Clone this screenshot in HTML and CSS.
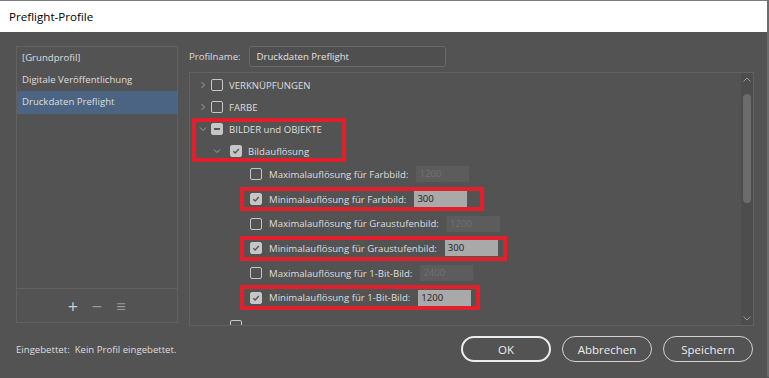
FILE: index.html
```html
<!DOCTYPE html>
<html lang="de">
<head>
    <meta charset="UTF-8">
    <title>Preflight-Profile</title>
    <link rel="stylesheet" href="styles.css">
</head>
<body>
    <div class="window">
        <div class="titlebar">Preflight-Profile</div>

        <div class="main">
            <div class="profiles">
                <ul class="profileList">
                    <li>[Grundprofil]</li>
                    <li>Digitale Veröffentlichung</li>
                    <li class="selected">Druckdaten Preflight</li>
                </ul>
                <div class="listTools">
                    <span class="tool plus">+</span>
                    <span class="tool minus">&minus;</span>
                    <span class="tool menu">&equiv;</span>
                </div>
            </div>

            <div class="editor">
                <div class="nameRow">
                    <label for="profileName">Profilname:</label>
                    <input type="text" id="profileName" class="nameField" value="Druckdaten Preflight">
                </div>

                <div class="treePanel">
                    <div class="tree">
                        <div class="row level1">
                            <svg class="chev" width="8" height="8" viewBox="0 0 8 8"><path d="M2.5 1 L5.5 4 L2.5 7" /></svg>
                            <span class="cb"></span>
                            <span class="label upper">VERKNÜPFUNGEN</span>
                        </div>
                        <div class="row level1">
                            <svg class="chev" width="8" height="8" viewBox="0 0 8 8"><path d="M2.5 1 L5.5 4 L2.5 7" /></svg>
                            <span class="cb"></span>
                            <span class="label upper">FARBE</span>
                        </div>

                        <div class="group hl">
                            <div class="row level1">
                                <svg class="chev" width="8" height="8" viewBox="0 0 8 8"><path d="M1 2.5 L4 5.5 L7 2.5" /></svg>
                                <span class="cb mixed"><span class="dash"></span></span>
                                <span class="label">BILDER und OBJEKTE</span>
                            </div>
                            <div class="row level2">
                                <svg class="chev" width="8" height="8" viewBox="0 0 8 8"><path d="M1 2.5 L4 5.5 L7 2.5" /></svg>
                                <span class="cb checked"><svg width="12" height="12" viewBox="0 0 12 12"><path d="M2.8 6.2 L5 8.4 L9.4 3.6" /></svg></span>
                                <span class="label">Bildauflösung</span>
                            </div>
                        </div>

                        <div class="row leaf">
                            <span class="cb"></span>
                            <span class="label">Maximalauflösung für Farbbild:</span>
                            <span class="value off">1200</span>
                        </div>
                        <div class="row leaf hl wideRight">
                            <span class="cb checked"><svg width="12" height="12" viewBox="0 0 12 12"><path d="M2.8 6.2 L5 8.4 L9.4 3.6" /></svg></span>
                            <span class="label">Minimalauflösung für Farbbild:</span>
                            <span class="value">300</span>
                        </div>
                        <div class="row leaf">
                            <span class="cb"></span>
                            <span class="label">Maximalauflösung für Graustufenbild:</span>
                            <span class="value off">1200</span>
                        </div>
                        <div class="row leaf hl">
                            <span class="cb checked"><svg width="12" height="12" viewBox="0 0 12 12"><path d="M2.8 6.2 L5 8.4 L9.4 3.6" /></svg></span>
                            <span class="label">Minimalauflösung für Graustufenbild:</span>
                            <span class="value">300</span>
                        </div>
                        <div class="row leaf">
                            <span class="cb"></span>
                            <span class="label">Maximalauflösung für 1-Bit-Bild:</span>
                            <span class="value off">2400</span>
                        </div>
                        <div class="row leaf hl">
                            <span class="cb checked"><svg width="12" height="12" viewBox="0 0 12 12"><path d="M2.8 6.2 L5 8.4 L9.4 3.6" /></svg></span>
                            <span class="label">Minimalauflösung für 1-Bit-Bild:</span>
                            <span class="value">1200</span>
                        </div>
                        <div class="row level2 nextRow">
                            <span class="chevSpace"></span>
                            <span class="cb"></span>
                        </div>
                    </div>

                    <div class="scrollbar">
                        <svg class="arrow" width="10" height="8" viewBox="0 0 10 8"><path d="M1.5 5.5 L5 2 L8.5 5.5" /></svg>
                        <div class="thumbTrack"><div class="thumb"></div></div>
                        <svg class="arrow" width="10" height="8" viewBox="0 0 10 8"><path d="M1.5 2.5 L5 6 L8.5 2.5" /></svg>
                    </div>
                </div>
            </div>
        </div>

        <div class="footer">
            <p class="embedded">Eingebettet:&nbsp; Kein Profil eingebettet.</p>
            <div class="buttons">
                <button class="btn primary">OK</button>
                <button class="btn">Abbrechen</button>
                <button class="btn">Speichern</button>
            </div>
        </div>
    </div>
</body>
</html>
```

FILE: styles.css
```css
body {
    margin: 0;
    padding: 0;
    width: 769px;
    height: 378px;
    overflow: hidden;
    background: #535353;
    font-family: 'Open Sans', 'Noto Sans', sans-serif;
    font-size: 9.6px;
    color: #dedede;
}

.window {
    height: 377px;
    border-top: 1px solid #7c7c7c;
    border-right: 2px solid #6b6b6b;
    box-sizing: border-box;
    display: flex;
    flex-direction: column;
}

.titlebar {
    height: 31px;
    background: #fff;
    color: #000;
    font-size: 11.6px;
    line-height: 31px;
    padding-left: 9px;
}

.main {
    display: flex;
    padding: 14px 0 0 16px;
    gap: 11px;
}

/* left column */

.profiles {
    width: 162px;
    height: 277px;
    border: 1px solid #626262;
    box-sizing: border-box;
    display: flex;
    flex-direction: column;
}

.profileList {
    list-style: none;
    margin: 0;
    padding: 0;
    flex: 1;
}

.profileList li {
    height: 22px;
    line-height: 22px;
    padding-left: 5px;
}

.profileList li.selected {
    background: #4b6483;
    height: 23px;
}

.listTools {
    height: 33px;
    border-top: 1px solid #626262;
    display: flex;
    justify-content: center;
    align-items: center;
    gap: 10px;
}

.tool {
    width: 14px;
    text-align: center;
    font-size: 18px;
    line-height: 18px;
    color: #9a9a9a;
}

.tool.plus {
    color: #cfcfcf;
}

.tool.menu {
    font-size: 16px;
}

/* right column */

.editor {
    display: flex;
    flex-direction: column;
    gap: 5px;
}

.nameRow {
    display: flex;
    align-items: center;
    gap: 8px;
}

.nameField {
    width: 197px;
    height: 21px;
    box-sizing: border-box;
    background: #4f4f4f;
    border: 1px solid #6a6a6a;
    border-radius: 3px;
    color: #e2e2e2;
    font-family: inherit;
    font-size: 9.6px;
    padding: 0 7px;
    outline: none;
}

.treePanel {
    width: 565px;
    height: 254px;
    border: 1px solid #626262;
    box-sizing: border-box;
    display: flex;
    overflow: hidden;
}

.tree {
    flex: 1;
    padding-top: 1px;
}

.row {
    display: flex;
    align-items: center;
    height: 22px;
    white-space: nowrap;
}

.level1 {
    padding-left: 9px;
}

.level2 {
    padding-left: 23px;
}

.group .level1 {
    padding-left: 7px;
}

.group .level2 {
    padding-left: 21px;
}

.leaf {
    height: 24.7px;
    padding-left: 60px;
}

.nextRow {
    margin-top: 5px;
}

.chev {
    width: 8px;
    height: 8px;
    margin-right: 4px;
    fill: none;
    stroke: #a3a3a3;
    stroke-width: 1;
}

.level2 .chev {
    margin-right: 9px;
}

.chevSpace {
    width: 17px;
}

.cb {
    width: 12px;
    height: 12px;
    box-sizing: border-box;
    border: 1px solid #c6c6c6;
    border-radius: 2px;
    flex-shrink: 0;
    display: flex;
    align-items: center;
    justify-content: center;
}

.cb.checked,
.cb.mixed {
    background: #c6c6c6;
}

.cb svg {
    fill: none;
    stroke: #565656;
    stroke-width: 1.6;
}

.cb .dash {
    width: 6px;
    height: 2px;
    background: #565656;
}

.label {
    margin-left: 6px;
}

.leaf .label {
    margin-left: 7px;
}

.value {
    width: 53px;
    height: 16px;
    line-height: 16px;
    margin-left: 8px;
    padding-left: 3px;
    box-sizing: border-box;
    background: #a9a9a9;
    color: #1c1c1c;
}

.value.off {
    background: #5c5c5c;
    color: #727272;
}

/* red markers */

.hl {
    outline: 4px solid #e2202b;
    outline-offset: -4px;
}

.group {
    width: 154px;
    margin-left: 2px;
    box-sizing: border-box;
}

.leaf.hl {
    width: fit-content;
    margin-left: 50px;
    padding-left: 10px;
    padding-right: 9px;
}

.leaf.wideRight {
    padding-right: 17px;
}

/* scrollbar */

.scrollbar {
    width: 12px;
    background: #4d4d4d;
    display: flex;
    flex-direction: column;
    align-items: center;
    padding: 3px 0 3px;
    box-sizing: border-box;
}

.arrow {
    fill: none;
    stroke: #9a9a9a;
    stroke-width: 1;
}

.thumbTrack {
    flex: 1;
    width: 100%;
    display: flex;
    justify-content: center;
    padding-top: 10px;
}

.thumb {
    width: 8px;
    height: 109px;
    border-radius: 4px;
    background: #6b6b6b;
}

/* footer */

.footer {
    display: flex;
    justify-content: space-between;
    align-items: center;
    padding: 10px 14px 0 16px;
}

.embedded {
    margin: 0;
    font-size: 9.6px;
}

.buttons {
    display: flex;
    gap: 11px;
}

.btn {
    width: 90px;
    height: 26px;
    border: 1px solid #d2d2d2;
    border-radius: 13px;
    background: transparent;
    color: #ececec;
    font-family: inherit;
    font-size: 11.5px;
}

.btn.primary {
    border: 2px solid #ececec;
}
```
